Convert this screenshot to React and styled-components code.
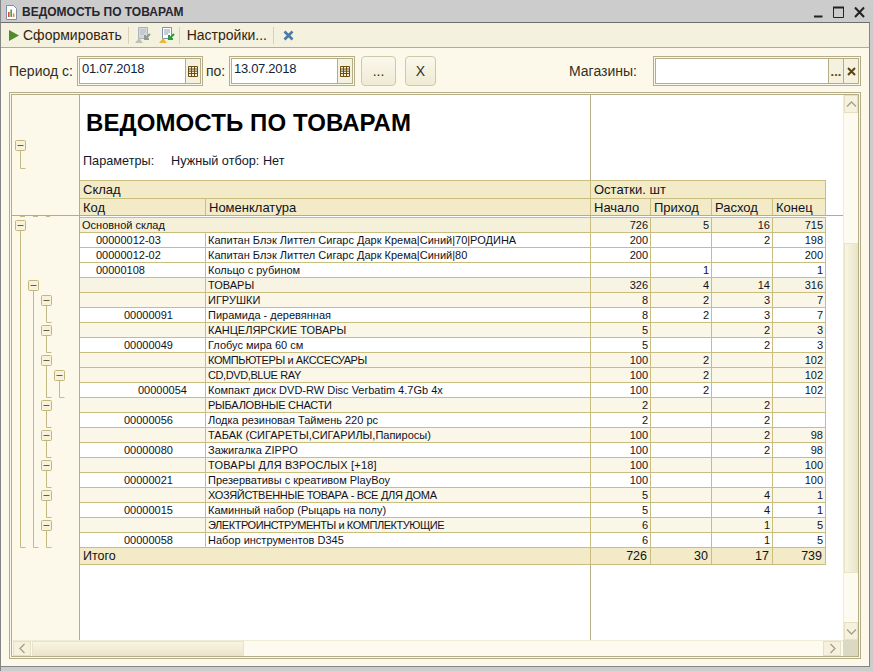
import React from 'react';
import styled, { createGlobalStyle } from 'styled-components';

const GlobalStyle = createGlobalStyle`
  html, body {
    margin: 0;
    padding: 0;
    background: #ccc;
  }
  * {
    box-sizing: border-box;
  }
`;

const FONT = '"Liberation Sans", Arial, sans-serif';
const LINE = '#b5ad88';
const CELL_LINE = '#c9bd80';
const CREAM = '#fcf9ea';

const Window = styled.div`
  width: 873px;
  height: 671px;
  display: flex;
  flex-direction: column;
  background: #ccc;
  border-left: 1px solid #858585;
  font-family: ${FONT};
  color: #1a1a1a;
  overflow: hidden;
`;

const TitleBar = styled.div`
  height: 23px;
  flex: none;
  display: flex;
  align-items: center;
  padding: 2px 5px 0 4px;
  border-bottom: 1px solid #6e6e6e;
  margin-right: 3px;
`;

const TitleText = styled.div`
  margin-left: 4px;
  font-size: 12px;
  font-weight: bold;
  color: #26262c;
  flex: 1;
`;

const WinButtons = styled.div`
  display: flex;
  align-items: center;
  gap: 10px;
`;

const Body = styled.div`
  flex: none;
  width: 868px;
  height: 644px;
  display: flex;
  flex-direction: column;
  background: ${CREAM};
  border-bottom: 1px solid #858585;
  box-shadow: 1px 0 0 #858585;
`;

const Toolbar = styled.div`
  height: 25px;
  flex: none;
  display: flex;
  align-items: center;
  padding-left: 8px;
  background: #f4f1df;
  border-bottom: 1px solid ${LINE};
`;

const ToolText = styled.span`
  font-size: 14px;
  color: #33230f;
  margin: ${(p) => p.$margin || '0'};
  white-space: nowrap;
`;

const ToolSep = styled.div`
  width: 1px;
  height: 17px;
  background: #d8d3b8;
  margin: ${(p) => p.$margin || '0'};
`;

const ToolIcon = styled.svg`
  flex: none;
  display: block;
  margin: ${(p) => p.$margin || '0'};
`;

const FilterRow = styled.div`
  height: 44px;
  flex: none;
  display: flex;
  align-items: flex-start;
  padding: 8px 0 0 8px;
`;

const FilterLabel = styled.div`
  font-size: 14px;
  line-height: 30px;
  color: #33301f;
  width: ${(p) => p.$w}px;
  padding-left: ${(p) => p.$pl || 0}px;
  flex: none;
  white-space: nowrap;
`;

const Field = styled.div`
  width: ${(p) => p.$w}px;
  height: 30px;
  flex: none;
  display: flex;
  margin-right: ${(p) => p.$mr || 0}px;
  border: 3px double ${LINE};
`;

const FieldValue = styled.div`
  flex: 1;
  background: #fff;
  font-size: 13px;
  letter-spacing: -0.3px;
  line-height: 20px;
  padding-left: 2px;
  color: #10233a;
`;

const FieldButton = styled.div`
  width: 15px;
  flex: none;
  display: flex;
  align-items: center;
  justify-content: center;
  background: #f4f1df;
  border-left: 1px solid ${LINE};
  font-size: 13px;
  font-weight: bold;
  color: #6a4d10;
`;

const PushButton = styled.div`
  width: ${(p) => p.$w}px;
  height: 30px;
  flex: none;
  margin: 0 ${(p) => p.$mr}px 0 ${(p) => p.$ml || 0}px;
  display: flex;
  align-items: center;
  justify-content: center;
  border: 1px solid #cfc9a8;
  border-radius: 4px;
  background: linear-gradient(#faf8ec, #efebd4);
  font-size: 14px;
  color: #33301f;
`;

const Spacer = styled.div`
  flex: 1;
`;

const Frame = styled.div`
  margin-left: 8px;
  width: 852px;
  height: 567px;
  flex: none;
  display: grid;
  grid-template-columns: 831px 15px;
  grid-template-rows: 545px 16px;
  border: 3px double ${LINE};
`;

const ReportArea = styled.div`
  display: flex;
  flex-direction: column;
  overflow: hidden;
`;

const FrozenRow = styled.div`
  height: 121px;
  flex: none;
  display: flex;
  border-bottom: 1px solid ${LINE};
`;

const ScrollRow = styled.div`
  flex: 1;
  display: flex;
  min-height: 0;
`;

const Gutter = styled.div`
  width: 68px;
  flex: none;
  background: ${CREAM};
  border-right: 1px solid ${LINE};

  svg {
    display: block;
  }
`;

// white sheet with the column rule that runs down the whole report
const Sheet = styled.div`
  flex: 1;
  min-width: 0;
  display: flex;
  flex-direction: column;
  background: linear-gradient(${LINE}, ${LINE}) 510px 0 / 1px 100% no-repeat #fff;
`;

const ReportTitle = styled.div`
  font-size: 24px;
  letter-spacing: 0.1px;
  line-height: 27px;
  font-weight: bold;
  color: #000;
  margin: 14px 0 0 6px;
`;

const Params = styled.div`
  display: flex;
  font-size: 12.7px;
  line-height: 14px;
  color: #10182a;
  margin: 18px 0 0 3px;
  flex: 1;
`;

const ParamName = styled.span`
  width: 88px;
`;

const Rows = styled.div`
  width: 746px;
  flex: none;
  padding-top: ${(p) => p.$top || 0}px;
`;

const Row = styled.div`
  display: grid;
  grid-template-columns: 126px 385px 60px 61px 61px 53px;
  height: ${(p) => p.$h}px;
  background: ${(p) => p.$bg};
  border-top: ${(p) => (p.$top ? `1px solid ${CELL_LINE}` : '0')};
  border-bottom: ${(p) => (p.$flush ? '0' : `1px solid ${CELL_LINE}`)};
  box-sizing: ${(p) => (p.$top ? 'content-box' : 'border-box')};
`;

const Cell = styled.div`
  grid-column: span ${(p) => p.$span || 1};
  border-right: 1px solid ${CELL_LINE};
  font-size: ${(p) => p.$size}px;
  letter-spacing: ${(p) => p.$track || 0}px;
  line-height: ${(p) => p.$lh}px;
  padding: 0 ${(p) => p.$pr || 0}px 0 ${(p) => p.$pl || 0}px;
  text-align: ${(p) => p.$align || 'left'};
  white-space: nowrap;
  overflow: hidden;
  color: #10121c;
`;

const VBar = styled.div`
  grid-row: 1 / 3;
  grid-column: 2;
  display: flex;
  flex-direction: column;
  height: 545px;
  background: #fdfbf0;
  border-left: 1px solid #f0ebd4;
`;

const HBar = styled.div`
  display: flex;
  align-items: stretch;
  background: #fdfbf0;
  border-top: 1px solid #f0ebd4;
  padding-left: 1px;
`;

const ScrollButton = styled.div`
  flex: none;
  display: flex;
  align-items: center;
  justify-content: center;
  width: ${(p) => p.$w}px;
  height: ${(p) => p.$h}px;
  margin: ${(p) => p.$margin || '0'};
  background: #f5f1dc;
  border: 1px solid #e6e0c0;
`;

const VThumb = styled.div`
  flex: none;
  height: 330px;
  margin: 130px 0 0 0;
  background: linear-gradient(90deg, #f8f5e2, #ebe6ca);
  border: 1px solid #e9e4c8;
`;

const HThumb = styled.div`
  flex: none;
  width: 212px;
  margin-left: 1px;
  background: linear-gradient(#f8f5e2, #ebe6ca);
  border: 1px solid #e9e4c8;
`;

const Corner = styled.div`
  grid-row: 2;
  grid-column: 2;
  background: #dcd9c3;
`;

const SIZE_ROW = 11;
const SIZE_HEAD = 13;

// track: spacing for the capital-letter names, which ran at other widths on screen
const rows = [
  { level: 0, wide: 'Основной склад', v: [726, 5, 16, 715] },
  { code: '00000012-03', pad: 16, name: 'Капитан Блэк Литтел Сигарс Дарк Крема|Синий|70|РОДИНА', v: [200, '', 2, 198] },
  { code: '00000012-02', pad: 16, name: 'Капитан Блэк Литтел Сигарс Дарк Крема|Синий|80', v: [200, '', '', 200] },
  { code: '00000108', pad: 16, name: 'Кольцо с рубином', v: ['', 1, '', 1] },
  { level: 1, name: 'ТОВАРЫ', v: [326, 4, 14, 316] },
  { level: 2, name: 'ИГРУШКИ', v: [8, 2, 3, 7] },
  { code: '00000091', pad: 44, name: 'Пирамида - деревянная', v: [8, 2, 3, 7] },
  { level: 2, name: 'КАНЦЕЛЯРСКИЕ ТОВАРЫ', v: [5, '', 2, 3] },
  { code: '00000049', pad: 44, name: 'Глобус мира 60 см', v: [5, '', 2, 3] },
  { level: 2, name: 'КОМПЬЮТЕРЫ и АКССЕСУАРЫ', track: -0.4, v: [100, 2, '', 102] },
  { level: 2, name: 'CD,DVD,BLUE RAY', track: -0.4, v: [100, 2, '', 102] },
  { code: '00000054', pad: 58, name: 'Компакт диск DVD-RW Disc Verbatim 4.7Gb 4x', v: [100, 2, '', 102] },
  { level: 2, name: 'РЫБАЛОВНЫЕ СНАСТИ', track: -0.25, v: [2, '', 2, ''] },
  { code: '00000056', pad: 44, name: 'Лодка резиновая Таймень 220 рс', v: [2, '', 2, ''] },
  { level: 2, name: 'ТАБАК (СИГАРЕТЫ,СИГАРИЛЫ,Папиросы)', v: [100, '', 2, 98] },
  { code: '00000080', pad: 44, name: 'Зажигалка ZIPPO', v: [100, '', 2, 98] },
  { level: 2, name: 'ТОВАРЫ ДЛЯ ВЗРОСЛЫХ [+18]', track: 0.2, v: [100, '', '', 100] },
  { code: '00000021', pad: 44, name: 'Презервативы с креативом PlayBoy', v: [100, '', '', 100] },
  { level: 2, name: 'ХОЗЯЙСТВЕННЫЕ ТОВАРА - ВСЕ ДЛЯ ДОМА', track: -0.3, v: [5, '', 4, 1] },
  { code: '00000015', pad: 44, name: 'Каминный набор (Рыцарь на полу)', v: [5, '', 4, 1] },
  { level: 2, name: 'ЭЛЕКТРОИНСТРУМЕНТЫ и КОМПЛЕКТУЮЩИЕ', track: -0.45, v: [6, '', 1, 5] },
  { code: '00000058', pad: 44, name: 'Набор инструментов D345', v: [6, '', 1, 5] },
];

const ROW_BG = ['#f5f0da', '#f8f4e3', '#faf7e9'];

// outline groups: level, first row, row after the last one
const groups = [
  [1, 0, 22],
  [2, 4, 22],
  [3, 5, 7],
  [3, 7, 9],
  [3, 9, 12],
  [4, 10, 12],
  [3, 12, 14],
  [3, 14, 16],
  [3, 16, 18],
  [3, 18, 20],
  [3, 20, 22],
];

const rowY = (i) => 218 + 15 * i;

const OutlineMark = ({ x, top, end }) => (
  <g fill="none">
    <path d={`M${x + 5} ${top + 10}V${end}H${x + 10}`} stroke="#c6ba84" />
    <rect x={x} y={top} width="10" height="10" rx="1" fill="#f6f2dc" stroke="#c2b67e" />
    <path d={`M${x + 2} ${top + 5}H${x + 8}`} stroke="#6b6034" />
  </g>
);

const FrozenOutline = () => (
  <svg width="67" height="120" viewBox="12 95 67 120">
    <OutlineMark x={15.5} top={140.5} end={168.5} />
  </svg>
);

const BodyOutline = () => (
  <svg width="67" height="424" viewBox="12 216 67 424">
    <path d="M20 216.5h5M33 216.5h5M46 216.5h4" stroke="#c6ba84" fill="none" />
    {groups.map(([level, from, to]) => (
      <OutlineMark
        key={`${level}-${from}`}
        x={15.5 + 13 * (level - 1)}
        top={rowY(from) + 2.5}
        end={rowY(to) - 0.5}
      />
    ))}
  </svg>
);

const ReportIcon = () => (
  <ToolIcon width="13" height="15" viewBox="0 0 13 15">
    <path d="M1.5.5h7l3 3v11h-10z" fill="#fff" stroke="#7f8fa8" />
    <path d="M3 12V7h1.6v5z" fill="#d8453a" />
    <path d="M5.4 12V4.5H7V12z" fill="#4e9a3c" />
    <path d="M7.8 12V8.5h1.6V12z" fill="#e08a2c" />
  </ToolIcon>
);

const MinimizeIcon = () => (
  <svg width="9" height="12" viewBox="0 0 9 12">
    <path d="M0 10.5h8.5" stroke="#222" strokeWidth="2" />
  </svg>
);

const MaximizeIcon = () => (
  <svg width="11" height="12" viewBox="0 0 11 12">
    <path d="M.5 1.5h10v10H.5z" fill="none" stroke="#222" />
    <path d="M0 1.5h11" stroke="#222" strokeWidth="2" />
  </svg>
);

const CloseIcon = () => (
  <svg width="11" height="12" viewBox="0 0 11 12">
    <path d="M1 1.5l9 9.5M10 1.5L1 11" stroke="#222" strokeWidth="2" />
  </svg>
);

const PlayIcon = () => (
  <ToolIcon width="10" height="11" viewBox="0 0 10 11" $margin="0 4px 0 0">
    <path d="M0 0l10 5.5L0 11z" fill="#4f8a2b" />
  </ToolIcon>
);

const ReportDocIcon = ({ muted, margin }) => (
  <ToolIcon width="16" height="17" viewBox="0 0 16 17" $margin={margin}>
    <path d="M3.5.5h9v11h-9z" fill={muted ? '#d5d8dc' : '#fff'} stroke={muted ? '#aab2ba' : '#7f8fa8'} />
    <path d="M5 3h6M5 5h6M5 7h4" stroke={muted ? '#b4bac0' : '#8a9ab0'} />
    <path d="M0 16l4-5 4 5z" fill={muted ? '#c2c0b4' : '#e8b93c'} />
    <path d="M15 7l-5 5m0-4v4h4" fill="none" stroke={muted ? '#8d9a8f' : '#2f9a3a'} strokeWidth="2" />
  </ToolIcon>
);

const CrossIcon = () => (
  <ToolIcon width="11" height="11" viewBox="0 0 11 11" $margin="0 0 0 9px">
    <path d="M1.5 1.5l8 8M9.5 1.5l-8 8" stroke="#4a7ba8" strokeWidth="2.6" />
  </ToolIcon>
);

const CalendarIcon = () => (
  <svg width="10" height="11" viewBox="0 0 10 11">
    <path d="M.5.5h9v10h-9zM.5 3h9M.5 5.2h9M.5 7.5h9M3.5.5v10M6.5.5v10" fill="none" stroke="#6a4d10" />
  </svg>
);

const ClearIcon = () => (
  <svg width="9" height="9" viewBox="0 0 9 9">
    <path d="M1 1l7 7M8 1L1 8" stroke="#5c430e" strokeWidth="2" />
  </svg>
);

const Chevron = ({ d }) => (
  <svg width="11" height="11" viewBox="0 0 11 11">
    <path d={d} fill="none" stroke="#a79f80" strokeWidth="1.3" />
  </svg>
);

const DateField = ({ value }) => (
  <Field $w={126}>
    <FieldValue>{value}</FieldValue>
    <FieldButton>
      <CalendarIcon />
    </FieldButton>
  </Field>
);

const Amounts = ({ values, size, lh, pr }) =>
  values.map((n, i) => (
    <Cell key={i} $size={size} $lh={lh} $pr={pr} $align="right">
      {n}
    </Cell>
  ));

const App = () => (
  <>
    <GlobalStyle />
    <Window>
      <TitleBar>
        <ReportIcon />
        <TitleText>ВЕДОМОСТЬ ПО ТОВАРАМ</TitleText>
        <WinButtons>
          <MinimizeIcon />
          <MaximizeIcon />
          <CloseIcon />
        </WinButtons>
      </TitleBar>
      <Body>
        <Toolbar>
          <PlayIcon />
          <ToolText>Сформировать</ToolText>
          <ToolSep $margin="0 0 0 6px" />
          <ReportDocIcon muted margin="0 0 0 6px" />
          <ReportDocIcon margin="0 0 0 8px" />
          <ToolSep $margin="0 0 0 4px" />
          <ToolText $margin="0 0 0 7px">Настройки...</ToolText>
          <ToolSep $margin="0 0 0 6px" />
          <CrossIcon />
        </Toolbar>
        <FilterRow>
          <FilterLabel $w={68}>Период с:</FilterLabel>
          <DateField value="01.07.2018" />
          <FilterLabel $w={26} $pl={3}>по:</FilterLabel>
          <DateField value="13.07.2018" />
          <PushButton $w={35} $ml={6} $mr={9}>...</PushButton>
          <PushButton $w={31} $mr={0}>Х</PushButton>
          <Spacer />
          <FilterLabel $w={84}>Магазины:</FilterLabel>
          <Field $w={208} $mr={8}>
            <FieldValue />
            <FieldButton>...</FieldButton>
            <FieldButton>
              <ClearIcon />
            </FieldButton>
          </Field>
        </FilterRow>
        <Frame>
          <ReportArea>
            <FrozenRow>
              <Gutter>
                <FrozenOutline />
              </Gutter>
              <Sheet>
                <ReportTitle>ВЕДОМОСТЬ ПО ТОВАРАМ</ReportTitle>
                <Params>
                  <ParamName>Параметры:</ParamName>
                  <span>Нужный отбор: Нет</span>
                </Params>
                <Rows>
                  <Row $h={17} $top $bg="#f3ebc8">
                    <Cell $span={2} $size={SIZE_HEAD} $lh={18} $pl={3}>Склад</Cell>
                    <Cell $span={4} $size={SIZE_HEAD} $lh={18} $pl={3}>Остатки. шт</Cell>
                  </Row>
                  <Row $h={16} $flush $bg="#f3ebc8">
                    {['Код', 'Номенклатура', 'Начало', 'Приход', 'Расход', 'Конец'].map((h) => (
                      <Cell key={h} $size={SIZE_HEAD} $lh={17} $pl={3}>{h}</Cell>
                    ))}
                  </Row>
                </Rows>
              </Sheet>
            </FrozenRow>
            <ScrollRow>
              <Gutter>
                <BodyOutline />
              </Gutter>
              <Sheet>
                <Rows $top={1}>
                  {rows.map((r, i) => (
                    <Row
                      key={i}
                      $h={r.wide ? 14 : 15}
                      $top={!!r.wide}
                      $bg={r.level === undefined ? '#fff' : ROW_BG[r.level]}
                    >
                      {r.wide ? (
                        <Cell $span={2} $size={SIZE_ROW} $lh={14} $pl={2}>{r.wide}</Cell>
                      ) : (
                        <>
                          <Cell $size={SIZE_ROW} $lh={14} $pl={r.pad}>{r.code}</Cell>
                          <Cell $size={SIZE_ROW} $lh={14} $pl={2} $track={r.track}>{r.name}</Cell>
                        </>
                      )}
                      <Amounts values={r.v} size={SIZE_ROW} lh={14} pr={2} />
                    </Row>
                  ))}
                  <Row $h={17} $bg="#f3ebc8">
                    <Cell $span={2} $size={12.5} $lh={17} $pl={3}>Итого</Cell>
                    <Amounts values={[726, 30, 17, 739]} size={12.5} lh={17} pr={3} />
                  </Row>
                </Rows>
              </Sheet>
            </ScrollRow>
          </ReportArea>
          <VBar>
            <ScrollButton $w={14} $h={18}>
              <Chevron d="M1 7.5l4.5-4.5 4.5 4.5" />
            </ScrollButton>
            <VThumb />
            <Spacer />
            <ScrollButton $w={14} $h={18}>
              <Chevron d="M1 3.5l4.5 4.5 4.5-4.5" />
            </ScrollButton>
          </VBar>
          <HBar>
            <ScrollButton $w={18} $h={15}>
              <Chevron d="M7.5 1L3 5.5 7.5 10" />
            </ScrollButton>
            <HThumb />
            <Spacer />
            <ScrollButton $w={18} $h={15} $margin="0 2px 0 0">
              <Chevron d="M3.5 1L8 5.5 3.5 10" />
            </ScrollButton>
          </HBar>
          <Corner />
        </Frame>
      </Body>
    </Window>
  </>
);

export default App;
